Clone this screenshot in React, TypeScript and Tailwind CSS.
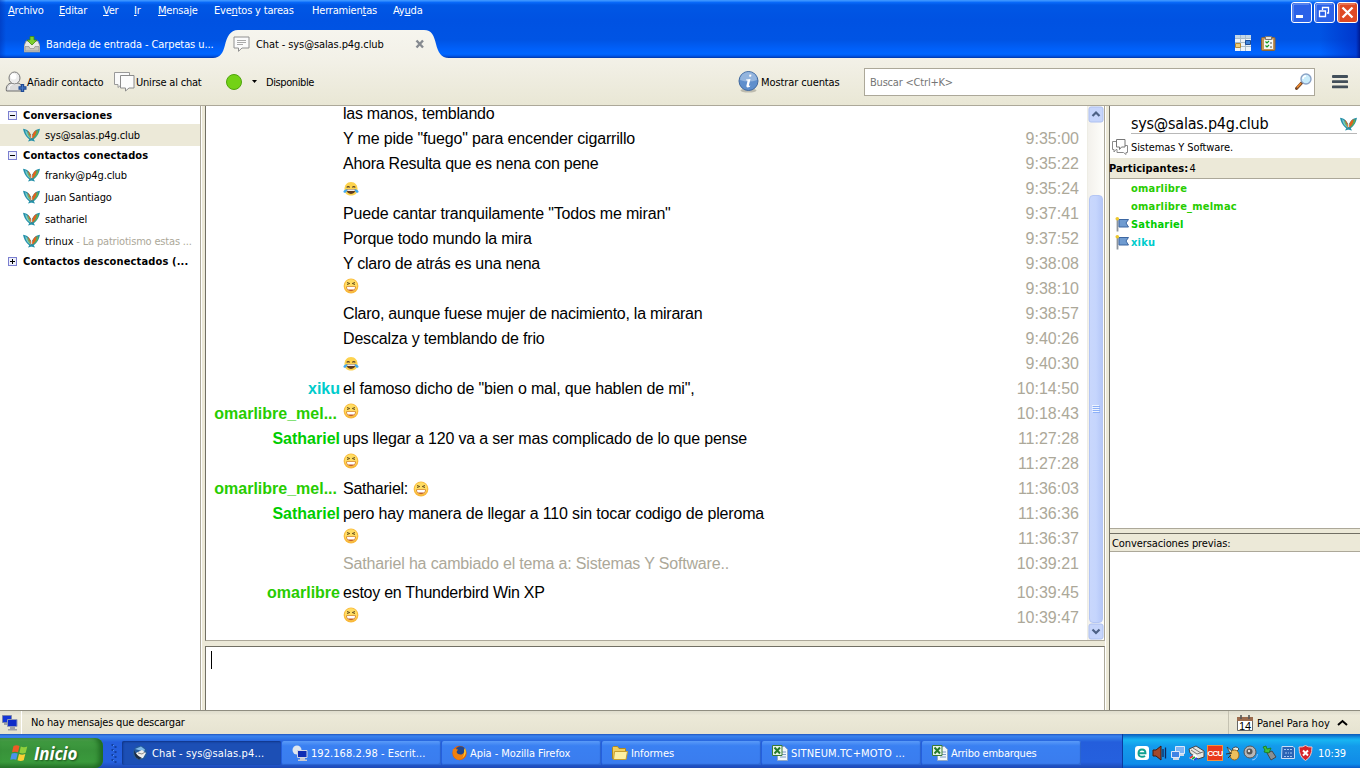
import React from 'react';

type Emoji = 'laugh' | 'joy';

interface ChatLine {
  nick?: string;
  color?: string;
  text?: string;
  emoji?: Emoji;
  raised?: boolean;
  system?: boolean;
  tight?: boolean;
  time?: string;
}

const GREEN = 'text-[#27cc00]';
const GREEN2 = 'text-[#00cc00]';
const CYAN = 'text-[#00cccc]';

const LINES: ChatLine[] = [
  { text: 'las manos, temblando', tight: true },
  { text: 'Y me pide "fuego" para encender cigarrillo', time: '9:35:00' },
  { text: 'Ahora Resulta que es nena con pene', tight: true, time: '9:35:22' },
  { emoji: 'joy', time: '9:35:24' },
  { text: 'Puede cantar tranquilamente "Todos me miran"', time: '9:37:41' },
  { text: 'Porque todo mundo la mira', time: '9:37:52' },
  { text: 'Y claro de atrás es una nena', tight: true, time: '9:38:08' },
  { emoji: 'laugh', raised: true, time: '9:38:10' },
  { text: 'Claro, aunque fuese mujer de nacimiento, la miraran', tight: true, time: '9:38:57' },
  { text: 'Descalza y temblando de frio', time: '9:40:26' },
  { emoji: 'joy', time: '9:40:30' },
  { nick: 'xiku', color: CYAN, text: 'el famoso dicho de "bien o mal, que hablen de mi",', time: '10:14:50' },
  { nick: 'omarlibre_mel...', color: GREEN, emoji: 'laugh', raised: true, time: '10:18:43' },
  { nick: 'Sathariel', color: GREEN2, text: 'ups llegar a 120 va a ser mas complicado de lo que pense', time: '11:27:28' },
  { emoji: 'laugh', raised: true, time: '11:27:28' },
  { nick: 'omarlibre_mel...', color: GREEN, text: 'Sathariel:', tight: true, emoji: 'laugh', time: '11:36:03' },
  { nick: 'Sathariel', color: GREEN2, text: 'pero hay manera de llegar a 110 sin tocar codigo de pleroma', time: '11:36:36' },
  { emoji: 'laugh', raised: true, time: '11:36:37' },
  { text: 'Sathariel ha cambiado el tema a: Sistemas Y Software..', system: true, time: '10:39:21' },
];

const LAST_LINES: ChatLine[] = [
  { nick: 'omarlibre', color: GREEN, text: 'estoy en Thunderbird Win XP', tight: true, time: '10:39:45' },
  { emoji: 'laugh', raised: true, time: '10:39:47' },
];

const Laugh: React.FC = () => (
  <svg width="16" height="16" viewBox="0 0 16 16" className="block shrink-0">
    <circle cx="8" cy="8" r="7.400" fill="#f9b93c" />
    <circle cx="8" cy="7.400" r="6.200" fill="#ffdc62" />
    <path d="M4 4.500l2.800 1L4 6.500M12 4.500l-2.800 1 2.800 1" fill="none" stroke="#6a5222" strokeWidth="1" />
    <path d="M3.200 8.600h9.600c0 3-2.200 4.600-4.800 4.600S3.200 11.600 3.200 8.600z" fill="#c4602a" />
    <path d="M4 9h8c0 1.100-.3 1.900-.8 2.500H4.800C4.300 10.900 4 10.100 4 9z" fill="#fff" />
  </svg>
);

const Joy: React.FC = () => (
  <svg width="16" height="16" viewBox="0 0 16 16" className="block shrink-0">
    <path d="M1.500 9C1.200 4 4 1 8 1s6.800 3 6.500 8c-.4 4-3 5.500-6.500 5.500S1.900 13 1.500 9z" fill="#fdd34f" />
    <path d="M3.800 6.600c.6-1.400 2.200-1.400 2.800 0M9.400 6.600c.6-1.400 2.200-1.400 2.800 0" fill="none" stroke="#5b4526" strokeWidth="1.200" />
    <path d="M3.500 8.300h9c0 3-2 4.600-4.500 4.600s-4.500-1.600-4.500-4.600z" fill="#5c3a21" />
    <path d="M4.200 8.500h7.600v1.400H4.200z" fill="#fff" />
    <path d="M.4 10.500C.8 9 2.500 8 4 8.200c.2 2-.6 3.600-2 3.600-1 0-1.600-.6-1.600-1.300zM15.600 10.500C15.200 9 13.500 8 12 8.200c-.2 2 .6 3.600 2 3.600 1 0 1.600-.6 1.600-1.300z" fill="#3fa9f0" />
  </svg>
);

const Wings: React.FC = () => (
  <svg width="17" height="14" viewBox="0 0 17 14" className="block shrink-0">
    <path d="M0 .8C3 1 5.500 2.600 7 5.200L9.500 9l2.500 4.500C6.500 13 1.500 8.500 0 .8z" fill="#2490a8" />
    <path d="M17 .8C14 1 11.500 2.600 10 5.200L7.500 9 5 13.500C10.500 13 15.500 8.500 17 .8z" fill="#2490a8" />
    <path d="M2 2c2.800 1.600 4.500 4.500 6 9C4.800 9.500 2.600 6.500 2 2z" fill="#79c7cf" />
    <path d="M4.600 2.400C6.300 3.500 7.200 5 8.300 8.400L8 11C7 8 6 5.500 4.600 2.400z" fill="#e2621c" />
    <path d="M4 3.600c1.600 2 2.700 4.200 3.300 6.600C5.700 8.500 4.600 6.400 4 3.600z" fill="#6fb23e" />
    <path d="M13.600 2c-3 1.400-4.600 4.500-5 8.800 3-1.500 5-4.600 5-8.800z" fill="#e2621c" />
    <path d="M15.400 2.200c-.3 3.800-2.400 6.900-5.400 8.500 2-2.400 3.500-4.800 4-8z" fill="#6fb23e" />
    <path d="M7.800 7h1.400v3H7.800z" fill="#fff" opacity=".7" />
    <path d="M7 0h3L8.500 6.500z" fill="none" />
  </svg>
);

const ChatRow: React.FC<{ line: ChatLine }> = ({ line }) => (
  <div className="flex h-[25px] items-center">
    <div
      className={`w-[134px] shrink-0 text-right font-bold whitespace-nowrap ${line.nick?.endsWith('...') ? 'pr-[3px]' : ''} ${line.color ?? ''}`}
    >
      {line.nick}
    </div>
    <div
      className={`ml-[3px] flex flex-1 items-center gap-[5px] whitespace-nowrap ${line.system ? 'text-[#aca899]' : 'text-black'} ${line.tight ? 'tracking-[-0.26px]' : 'tracking-[-0.17px]'}`}
    >
      {line.text && <span>{line.text}</span>}
      {line.emoji && (
        <span className={line.raised ? '-mt-[5px]' : ''}>{line.emoji === 'joy' ? <Joy /> : <Laugh />}</span>
      )}
    </div>
    <div className="mr-2 text-[#aca899]">{line.time}</div>
  </div>
);

const MENU = [
  { before: '', key: 'A', after: 'rchivo', w: 'w-[51px]' },
  { before: '', key: 'E', after: 'ditar', w: 'w-[44px]' },
  { before: '', key: 'V', after: 'er', w: 'w-[31px]' },
  { before: '', key: 'I', after: 'r', w: 'w-[24px]' },
  { before: '', key: 'M', after: 'ensaje', w: 'w-[56px]' },
  { before: 'Eve', key: 'n', after: 'tos y tareas', w: 'w-[98px]' },
  { before: 'Herramien', key: 't', after: 'as', w: 'w-[81px]' },
  { before: 'Ay', key: 'u', after: 'da', w: 'w-[40px]' },
];

const TitleBar: React.FC = () => (
  <div className="relative h-[58px] shrink-0 bg-[linear-gradient(to_right,#0030b080_0,transparent_6px,transparent_1320px,#0028c0a0_1356px,#001a90_1360px),linear-gradient(to_bottom,#3a93ff_0,#3a93ff_1px,#0a6cfc_2px,#0057e5_5px,#0052e2_20px,#0054e4_40px,#0060fa_49px,#0066ff_54px,#0056e8_56px,#0036a8_58px)] text-white">
    <div className="flex h-5 items-center pl-2 whitespace-nowrap">
      {MENU.map(m => (
        <span key={m.key} className={`shrink-0 ${m.w}`}>
          {m.before}
          <u className="underline-offset-1">{m.key}</u>
          {m.after}
        </span>
      ))}
    </div>
    <div className="flex h-[38px] pt-[10px] tracking-[-0.1px]">
      <div className="flex h-7 w-[213px] items-center gap-[6px] pl-6 whitespace-nowrap">
        <svg width="16" height="17" viewBox="0 0 16 17" className="shrink-0">
          <path d="M2 5h12l2 5v6H0v-6z" fill="#e9e9e4" stroke="#8a8a85" strokeWidth=".8" />
          <path d="M1 10.500h4l1 2h4l1-2h4V15H1z" fill="#c4c4bd" stroke="#888" strokeWidth=".6" />
          <path d="M6 .5h4V4h3L8 9 3 4h3z" fill="#7cd02d" stroke="#3f8a10" strokeWidth=".8" />
        </svg>
        <span>Bandeja de entrada - Carpetas u...</span>
      </div>
      <div className="relative h-7 w-[236px]">
        <svg width="236" height="28" viewBox="0 0 236 28" className="absolute inset-0">
          <defs>
            <linearGradient id="tab" x1="0" y1="0" x2="0" y2="1">
              <stop offset="0" stopColor="#f6f5ee" />
              <stop offset="1" stopColor="#f3f1e8" />
            </linearGradient>
          </defs>
          <path d="M0 28c7 0 10-5 12-13S17 0 25 0h186c8 0 10 6 12 14s5 14 13 14z" fill="url(#tab)" />
        </svg>
        <div className="relative flex h-7 items-center pl-5 text-black">
          <svg width="17" height="16" viewBox="0 0 17 16" className="shrink-0">
            <path d="M1 1h15v11H9l-3.500 3.300V12H1z" fill="#fbfbfb" stroke="#909090" />
            <path d="M4 4.500h9M4 6.500h9M4 8.500h6" stroke="#aaa" />
          </svg>
          <span className="ml-[6px] w-[159px]">Chat - sys@salas.p4g.club</span>
          <svg width="10" height="10" viewBox="0 0 10 10">
            <path d="M1.500 1.500l6.500 7M8 1.500l-6.500 7" stroke="#868a90" strokeWidth="2.400" />
          </svg>
        </div>
      </div>
      <div className="ml-auto flex items-start gap-[10px] pt-[5px] pr-[84px]">
        <svg width="16" height="16" viewBox="0 0 16 16">
          <path d="M0 0h16v16H0z" fill="#eef3f8" />
          <path d="M0 0h16v3H0z" fill="#c4d6e6" />
          <path d="M5.500 0v16M10.500 0v16M0 3.500h16M0 7.500h16M0 11.500h16" stroke="#a9bccb" />
          <path d="M.5 8.500h5v4h-5z" fill="#f0cf7a" stroke="#b88a34" />
          <path d="M10.500 5.500h5v4h-5z" fill="#3f83d8" stroke="#1c4b96" />
        </svg>
        <svg width="15" height="16" viewBox="0 0 15 16">
          <rect x=".5" y="2.500" width="13.500" height="13" rx="1" fill="#c39457" stroke="#8a6436" />
          <path d="M3 4.500h9v9.500H3z" fill="#f4f7f4" />
          <path d="M4.500 1.500h6v3h-6z" fill="#e2e2e2" stroke="#777" />
          <path d="M4.500 6.500L6 8l2-2M4.500 10.500L6 12l2-2" fill="none" stroke="#159a25" strokeWidth="1.200" />
          <path d="M9 8h2M9 12h2" stroke="#555" />
        </svg>
      </div>
    </div>
    <div className="absolute top-[2px] right-[2px] flex gap-[2px]">
      <svg width="21" height="21" viewBox="0 0 21 21">
        <rect x=".5" y=".5" width="20" height="20" rx="2.500" fill="#2b62e8" stroke="#fff" />
        <path d="M2 19V4q0-2 2-2h14" stroke="#7fa4f5" fill="none" />
        <path d="M5 13h7v3H5z" fill="#fff" />
      </svg>
      <svg width="21" height="21" viewBox="0 0 21 21">
        <rect x=".5" y=".5" width="20" height="20" rx="2.500" fill="#2b62e8" stroke="#fff" />
        <path d="M2 19V4q0-2 2-2h14" stroke="#7fa4f5" fill="none" />
        <path d="M8.500 8V5.500h6V11H13M8 5.500h7M5.500 9h6v5.500h-6z" stroke="#fff" strokeWidth="1.300" fill="none" />
      </svg>
      <svg width="21" height="21" viewBox="0 0 21 21">
        <rect x=".5" y=".5" width="20" height="20" rx="2.500" fill="#df4a24" stroke="#fff" />
        <path d="M2 19V4q0-2 2-2h14" stroke="#f09a80" fill="none" />
        <path d="M5.500 5.500l10 10M15.500 5.500l-10 10" stroke="#fff" strokeWidth="2.300" />
      </svg>
    </div>
  </div>
);

const Toolbar: React.FC = () => (
  <div className="flex h-[48px] shrink-0 items-center border-b border-[#aca899] bg-linear-to-b from-[#f3f1e8] to-[#e9e7d5] whitespace-nowrap">
    <svg width="22" height="22" viewBox="0 0 22 22" className="ml-[5px] shrink-0">
      <path d="M1.500 20c-1-4 1-7.500 5-8h6c3.500.5 5 3 4.500 8z" fill="#dcdcdc" stroke="#6e6e6e" />
      <path d="M4 18.500c0-3 1-4.500 3.500-5h4" fill="none" stroke="#fff" />
      <ellipse cx="9.500" cy="7" rx="5.500" ry="6" fill="#ececec" stroke="#7a7a7a" />
      <ellipse cx="8.500" cy="5.500" rx="3" ry="3" fill="#fff" />
      <path d="M17.500 13v8M13.500 17h8" stroke="#1f4a93" strokeWidth="3.400" />
      <path d="M17.500 14v6M14.500 17h6" stroke="#4a7cc8" strokeWidth="1.200" />
    </svg>
    <span className="w-[87px] pt-px tracking-[-0.14px]">Añadir contacto</span>
    <svg width="21" height="20" viewBox="0 0 21 20" className="shrink-0">
      <path d="M.5.500h15v12h-8L4 15.500v-3H.5z" fill="#fafafa" stroke="#999" />
      <path d="M6.500 3.500h13.500V16h-5L11.500 19v-3h-5z" fill="#fcfcfc" stroke="#8c8c8c" />
    </svg>
    <span className="ml-[1px] w-[90px] pt-px">Unirse al chat</span>
    <svg width="16" height="16" viewBox="0 0 16 16" className="shrink-0">
      <circle cx="8" cy="8" r="7.500" fill="#73d216" stroke="#4fa40c" />
    </svg>
    <svg width="5" height="3" viewBox="0 0 5 3" className="ml-[10px]">
      <path d="M0 0h5L2.500 3z" fill="#000" />
    </svg>
    <span className="ml-[9px] pt-px tracking-[-0.4px]">Disponible</span>
    <div className="ml-auto flex items-center">
      <svg width="21" height="22" viewBox="0 0 21 22" className="mr-px -ml-px shrink-0">
        <ellipse cx="10.500" cy="19.500" rx="8" ry="2" fill="#bdbbae" />
        <circle cx="10.500" cy="10" r="9.500" fill="#5f8fcc" stroke="#41699f" />
        <path d="M2 9a8.500 8 0 0 1 17 0q-8 3-17 0z" fill="#94b5de" />
        <path d="M11.500 3.500l2 .2-.5 2-2-.2zM8 8.500l4.500-.6-1.600 6.300q0 1 1.400.3l-.4 1.200q-3.800 1.800-3.500-1l1.100-4.700q0-.8-1.500-.6z" fill="#fff" />
      </svg>
      <span className="ml-[1px] w-[103px] pt-px tracking-[-0.1px]">Mostrar cuentas</span>
      <div className="flex h-7 w-[451px] items-center justify-between border border-[#aca899] bg-white pr-[2px] pl-[5px] text-[#757575]">
        <span className="pt-px">Buscar &lt;Ctrl+K&gt;</span>
        <svg width="17" height="17" viewBox="0 0 17 17">
          <path d="M1.500 15.500L7 9.500" stroke="#7a4a28" strokeWidth="3" strokeLinecap="round" />
          <path d="M2 14.500L6 10.200" stroke="#f08a2c" strokeWidth="1.600" />
          <circle cx="11" cy="6" r="5" fill="#c9ecfb" stroke="#8ba3c6" strokeWidth="1.400" />
          <path d="M8 6a3 3 0 0 1 3-3" stroke="#fff" fill="none" strokeWidth="1.500" />
        </svg>
      </div>
      <svg width="16" height="14" viewBox="0 0 16 14" className="mr-3 ml-[17px]">
        <path d="M1 1.500h14M1 6.700h14M1 11.900h14" stroke="#424f5a" strokeWidth="2.800" strokeLinecap="round" />
      </svg>
    </div>
  </div>
);

const GroupRow: React.FC<{ label: string; closed?: boolean }> = ({ label, closed }) => (
  <div className="flex h-[18px] items-center pl-2 font-bold">
    <svg width="9" height="9" viewBox="0 0 9 9" className="shrink-0">
      <rect x=".5" y=".5" width="8" height="8" fill="#eef0fa" stroke="#7b7fd0" />
      <path d={closed ? 'M2 4.500h5M4.500 2v5' : 'M2 4.500h5'} stroke="#000" />
    </svg>
    <span className="ml-[6px] tracking-[0.13px] whitespace-nowrap">{label}</span>
  </div>
);

const ContactRow: React.FC<{ name: string; status?: string; selected?: boolean }> = ({ name, status, selected }) => (
  <div className={`flex h-[22px] items-center pl-[23px] tracking-[-0.12px] whitespace-nowrap ${selected ? 'bg-[#ece9d8]' : ''}`}>
    <Wings />
    <span className="ml-[5px]">{name}</span>
    {status && <span className="tracking-[-0.18px] text-[#aca899]">&nbsp;- {status}</span>}
  </div>
);

const Sidebar: React.FC = () => (
  <div className="w-[201px] shrink-0 border-r border-[#aca899] bg-white">
    <GroupRow label="Conversaciones" />
    <ContactRow name="sys@salas.p4g.club" selected />
    <GroupRow label="Contactos conectados" />
    <ContactRow name="franky@p4g.club" />
    <ContactRow name="Juan Santiago" />
    <ContactRow name="sathariel" />
    <ContactRow name="trinux" status="La patriotismo estas ..." />
    <GroupRow label="Contactos desconectados (..." closed />
  </div>
);

const ScrollButton: React.FC<{ down?: boolean }> = ({ down }) => (
  <svg width="16" height="17" viewBox="0 0 16 17" className="shrink-0">
    <rect x="1" y="1" width="14" height="15" rx="2" fill="#c6d5fb" stroke="#adc0f0" />
    <path d={down ? 'M4.500 6.500L8 10l3.500-3.500' : 'M4.500 10L8 6.500l3.500 3.500'} stroke="#4d6185" strokeWidth="2.200" fill="none" />
  </svg>
);

const Scrollbar: React.FC = () => (
  <div className="flex w-[17px] flex-col border-l border-[#eeede5] bg-linear-to-r from-[#f3f1ec] to-[#fefefb]">
    <ScrollButton />
    <div className="mx-px mt-[72px] flex h-[428px] items-center justify-center rounded-sm border border-[#b4c6f4] bg-linear-to-r from-[#c9d7fc] via-[#c5d5fd] to-[#b6c8f8]">
      <svg width="8" height="8" viewBox="0 0 8 8">
        <path d="M0 .5h7M0 2.500h7M0 4.500h7M0 6.500h7" stroke="#eef4fe" />
        <path d="M1 1.500h7M1 3.500h7M1 5.500h7M1 7.500h7" stroke="#8cb0f8" />
      </svg>
    </div>
    <ScrollButton down />
  </div>
);

const Conversation: React.FC = () => (
  <div className="flex w-[900px] shrink-0 flex-col bg-[#ece9d8]">
    <div className="flex h-[535px] overflow-hidden border-r border-b border-l border-r-[#aca899] border-b-[#aca899] border-l-[#716f64] bg-white">
      <div className="-mt-[5px] flex-1 font-['Liberation_Sans',Arial,sans-serif] text-[16px] tracking-normal">
        {LINES.map((l, i) => (
          <ChatRow key={i} line={l} />
        ))}
        <div className="pt-1">
          {LAST_LINES.map((l, i) => (
            <ChatRow key={i} line={l} />
          ))}
        </div>
      </div>
      <Scrollbar />
    </div>
    <div className="mt-[5px] flex-1 border-t border-r border-l border-t-[#716f64] border-r-[#aca899] border-l-[#716f64] bg-white pt-1 pl-[5px]">
      <div className="h-[18px] w-px bg-black" />
    </div>
  </div>
);

const PARTICIPANTS = [
  { name: 'omarlibre', color: GREEN, flag: false },
  { name: 'omarlibre_melmac', color: GREEN, flag: false },
  { name: 'Sathariel', color: GREEN2, flag: true },
  { name: 'xiku', color: CYAN, flag: true },
];

const InfoPanel: React.FC = () => (
  <div className="flex flex-1 flex-col border-l border-[#716f64] bg-[#ece9d8]">
    <div className="h-[423px] border-b border-[#aca899] bg-white">
      <div className="mr-[3px] ml-[21px] flex h-7 items-end justify-between border-b border-[#b8b8b8]">
        <span className="text-[16px] leading-[18px] tracking-[-0.22px]">sys@salas.p4g.club</span>
        <div className="mb-[2px]">
          <Wings />
        </div>
      </div>
      <div className="flex h-6 items-center pt-[2px] pl-[2px]">
        <svg width="16" height="16" viewBox="0 0 16 16" className="shrink-0">
          <path d="M5 10.500H4L2 13v-2.500H.5v-8H4M10 13.500h1.500l2.500 2v-2h1.500v-7H13" fill="none" stroke="#8a8a8a" />
          <path d="M4.500.5h8.500V8H9.500l-2 2.500V8h-3z" fill="#fff" stroke="#777" />
          <path d="M5 10.500v3h5" fill="none" stroke="#8a8a8a" />
        </svg>
        <span className="ml-[3px] tracking-[-0.1px]">Sistemas Y Software.</span>
      </div>
      <div className="flex h-[21px] items-center border-b border-[#aca899] bg-[#ece9d8]">
        <b className="-ml-px tracking-[0.1px]">Participantes:</b>
        <span className="ml-px">4</span>
      </div>
      {PARTICIPANTS.map(p => (
        <div key={p.name} className="flex h-[18px] items-center pl-[5px]">
          <div className="w-4">
            {p.flag && (
              <svg width="14" height="15" viewBox="0 0 14 15">
                <path d="M2.500 2v12.500" stroke="#8e959c" strokeWidth="1.800" />
                <path d="M4 2.500h9.500L11 6l2.500 4H4z" fill="#6f9bd0" stroke="#3c67a2" />
                <circle cx="2.300" cy="1.800" r="1.800" fill="#edc72c" />
              </svg>
            )}
          </div>
          <b className={`tracking-[0.22px] ${p.color}`}>{p.name}</b>
        </div>
      ))}
    </div>
    <div className="mt-1 flex h-[19px] items-center border-t border-b border-t-[#716f64] border-b-[#aca899] pt-px pl-[2px] tracking-[-0.1px]">
      Conversaciones previas:
    </div>
    <div className="flex-1 bg-white" />
  </div>
);

const StatusBar: React.FC = () => (
  <div className="flex h-6 shrink-0 items-center border-t border-[#8f8d80] bg-linear-to-b from-[#dedccd] via-[#ece9d8] via-20% to-[#e6e3d0]">
    <svg width="16" height="16" viewBox="0 0 16 16" className="ml-[2px] shrink-0">
      <path d="M.5.5h9v7h-9z" fill="#1436d8" stroke="#7d86a8" />
      <path d="M5.500 4.500h9.500v7H5.500z" fill="#0f2cc8" stroke="#8f97b8" />
      <path d="M8 12h5v2H8zM6 14h9v1.500H6zM2 8h3v2H2z" fill="#9ea0a8" />
    </svg>
    <div className="ml-[3px] h-full w-px bg-white" />
    <span className="ml-[9px]">No hay mensajes que descargar</span>
    <div className="ml-auto flex h-full items-center border-l border-[#c5c2b2] pl-2">
      <svg width="16" height="16" viewBox="0 0 16 16">
        <path d="M.5 3.500h15v12H.5z" fill="#fff" stroke="#666" />
        <path d="M0 2h16v4H0z" fill="#9b6b4c" />
        <path d="M4 0v4M12 0v4" stroke="#555" strokeWidth="1.600" />
        <text x="8" y="14.500" textAnchor="middle" fontSize="11" letterSpacing="0" fill="#000" fontFamily="Liberation Sans">14</text>
      </svg>
      <span className="ml-1 w-[80px] pt-px tracking-[0px]">Panel Para hoy</span>
      <svg width="11" height="7" viewBox="0 0 11 7" className="mr-3">
        <path d="M1 6l4.500-4L10 6" stroke="#000" strokeWidth="2" fill="none" />
      </svg>
    </div>
  </div>
);

const ThunderbirdIcon: React.FC = () => (
  <svg width="16" height="16" viewBox="0 0 16 16" className="shrink-0">
    <circle cx="8" cy="8" r="7.200" fill="#245a9c" />
    <path d="M3 4l6-2.500 4 3-1 2z" fill="#7db8e8" />
    <path d="M3 8.500L10 5l4 3-3 5-5 1z" fill="#f1f1ee" />
    <path d="M2 5q2 5 8 8l-3 1.500Q2 13 2 5z" fill="#1d2c44" />
    <path d="M6 8l4 1 3-2" stroke="#888" fill="none" />
  </svg>
);

const RemoteIcon: React.FC = () => (
  <svg width="16" height="16" viewBox="0 0 16 16" className="shrink-0">
    <circle cx="5" cy="5" r="4.500" fill="#dfe6ee" />
    <path d="M5.500 5.500h9.500v7H5.500z" fill="#0f2cb4" stroke="#cfd4e4" />
    <path d="M8 13h5v1.500H8zM6 14.500h9V16H6z" fill="#c7c9d2" />
  </svg>
);

const FirefoxIcon: React.FC = () => (
  <svg width="15" height="16" viewBox="0 0 15 16" className="shrink-0">
    <circle cx="7.500" cy="8" r="7.200" fill="#e66000" />
    <circle cx="8.500" cy="6" r="4.800" fill="#20478f" />
    <path d="M.8 4Q2 4 3 3.500q1.500 1 3 1L4.500 7q1 3 5 2.500 2-.5 3.500-4.500 1.600 4-1 7.500-3 3-7 2Q0 12 .8 4z" fill="#f08010" />
    <path d="M13 3q2.500 6-2.500 10 2.500-5 1.500-8z" fill="#ffcb2d" />
  </svg>
);

const FolderIcon: React.FC = () => (
  <svg width="16" height="14" viewBox="0 0 16 14" className="shrink-0">
    <path d="M.5 12.500v-11l1-1h4l1.500 2h6.500v10z" fill="#f3cf5c" stroke="#b08a20" />
    <path d="M2.500 5.500h13l-1.500 8H1.500z" fill="#fdf0a4" stroke="#c79f2f" />
  </svg>
);

const ExcelIcon: React.FC = () => (
  <svg width="16" height="16" viewBox="0 0 16 16" className="shrink-0">
    <path d="M5.500 1.500h7l3 3v11h-10z" fill="#f2f6fb" stroke="#8fa6c4" />
    <path d="M8 7h6M8 9.500h6M8 12h6" stroke="#7d9cc4" />
    <path d="M.5.500h9.500v10H.5z" fill="#e8f3e4" stroke="#3b7a36" />
    <path d="M2.500 2.500l5.500 6M8 2.500l-5.500 6" stroke="#247a28" strokeWidth="1.900" />
  </svg>
);

const TASKS = [
  { title: 'Chat - sys@salas.p4...', icon: <ThunderbirdIcon />, tracking: 'tracking-[0.13px]', active: true },
  { title: '192.168.2.98 - Escrit...', icon: <RemoteIcon />, tracking: 'tracking-[0.06px]' },
  { title: 'Apia - Mozilla Firefox', icon: <FirefoxIcon />, tracking: 'tracking-[-0.06px]' },
  { title: 'Informes', icon: <FolderIcon />, tracking: 'tracking-[-0.06px]' },
  { title: 'SITNEUM.TC+MOTO ...', icon: <ExcelIcon />, tracking: 'tracking-[0.15px]' },
  { title: 'Arribo embarques', icon: <ExcelIcon />, tracking: 'tracking-[-0.2px]' },
];

const Tray: React.FC = () => (
  <div className="ml-auto flex h-full w-[238px] items-center gap-[2px] border-l border-[#0a3aa0] bg-[linear-gradient(to_bottom,#0c59b9_0,#139ee9_4px,#18b5f2_6px,#139beb_12px,#1290e8_24px,#0d8dea_30px,#095bc9_34px)] pt-1 pl-[11px]">
    <svg width="16" height="16" viewBox="0 0 16 16">
      <rect x="1" y="1" width="14" height="14" rx="3" fill="#fff" />
      <path d="M4.500 8.300h7Q11.500 4.500 8 4.500T4.500 8.200 8 11.800q2 0 3-1" fill="none" stroke="#10a090" strokeWidth="1.900" />
    </svg>
    <svg width="16" height="16" viewBox="0 0 16 16">
      <path d="M1 5h3l5-4v14l-5-4H1z" fill="#a3482a" stroke="#47180c" />
      <path d="M11 4v8M13.500 2.500v11" stroke="#10285c" strokeWidth="1.300" />
    </svg>
    <svg width="16" height="16" viewBox="0 0 16 16">
      <path d="M5.500 1.500h9v7h-9z" fill="#7db4f4" stroke="#dce8f8" />
      <path d="M1.500 6.500h8v6h-8z" fill="#3f83e4" stroke="#dce8f8" />
      <path d="M3 14h6M10 10h4" stroke="#cdd8e8" strokeWidth="2" />
    </svg>
    <svg width="17" height="16" viewBox="0 0 17 16">
      <path d="M1 4l7-3 8 5v6l-6 2-8-6z" fill="#e4e4e0" stroke="#454545" />
      <path d="M3 5l6 4 6-2M5 3l8 5" stroke="#777" fill="none" />
      <path d="M1 13l6-4 3 3-4 3.500z" fill="#fff" />
      <path d="M2 13l3-2" stroke="#e33" strokeWidth="1.600" />
      <path d="M4 14l3-2" stroke="#18a838" strokeWidth="1.600" />
      <path d="M6 15l3-2" stroke="#2345e0" strokeWidth="1.600" />
    </svg>
    <svg width="16" height="16" viewBox="0 0 16 16">
      <rect x=".5" y=".5" width="15" height="15" fill="#e93a1c" stroke="#f4903c" />
      <text x="8" y="11" textAnchor="middle" fontSize="8" fontWeight="bold" letterSpacing="-0.8" fill="#fff" fontFamily="Liberation Sans">CCU</text>
    </svg>
    <svg width="16" height="16" viewBox="0 0 16 16">
      <path d="M7 4q4-4 7 0l-3 3zM2 2l5 4-2 2z" fill="#f0eee0" stroke="#333" strokeWidth=".8" />
      <ellipse cx="9.500" cy="10" rx="4.500" ry="5" fill="#efc05c" stroke="#9c6a1c" />
      <path d="M1 9l6-1M3 13l3-3" stroke="#333" />
    </svg>
    <svg width="16" height="16" viewBox="0 0 16 16">
      <ellipse cx="7" cy="7" rx="6" ry="6" fill="#b7b7b7" stroke="#565656" />
      <circle cx="6.500" cy="6.500" r="3" fill="#555" />
      <circle cx="6" cy="6" r="1.200" fill="#ddd" />
      <path d="M14.500 9q0 4-4 6M12 14l-3 1" stroke="#7fc0ff" fill="none" />
    </svg>
    <svg width="17" height="16" viewBox="0 0 17 16">
      <path d="M6 8l5-2 4 6-5 3z" fill="#8a8f92" stroke="#43484c" />
      <path d="M2 2l3-1 1 3 4-1-2 5-5-1 1-2z" fill="#3fc03a" stroke="#187818" strokeWidth=".8" />
    </svg>
    <svg width="16" height="16" viewBox="0 0 16 16">
      <path d="M2 1.500h11l1.500 1.500v10.500H1.500z" fill="#2a63b4" stroke="#c9dcf4" />
      <path d="M4 4.500h8M4 11.500h8M5 8h2M8 8h1M10 8h2" stroke="#a9c9f4" strokeDasharray="2 1" />
    </svg>
    <svg width="15" height="16" viewBox="0 0 15 16">
      <path d="M7.500.5q3 2 6.500 1.500 0 10-6.500 13.500Q1 12 1 2 4.500 2.500 7.500.5z" fill="#d6232b" stroke="#f0c4c4" />
      <path d="M5 5.500l5 5M10 5.500l-5 5" stroke="#fff" strokeWidth="2" />
    </svg>
    <span className="ml-[3px] tracking-[-0.1px]">10:39</span>
  </div>
);

const Taskbar: React.FC = () => (
  <div className="flex h-[34px] shrink-0 bg-[linear-gradient(to_bottom,#1f55bd_0,#3b83ee_2px,#2f74e4_5px,#245edc_8px,#2560de_28px,#1c48b4_34px)] whitespace-nowrap text-white">
    <div className="mt-1 flex h-[30px] w-[103px] items-center gap-1 rounded-r-[8px] bg-[linear-gradient(to_bottom,#5cab5c_0,#3f9a40_4px,#38923a_12px,#3a9a3c_24px,#2c7a2e_30px)] pl-[10px] shadow-[inset_-4px_0_5px_#1f6a22]">
      <svg width="20" height="18" viewBox="0 0 20 18" className="shrink-0">
        <path d="M3.500 2Q6.500.5 9.500 2L8 8.300Q5 7 2 8.300z" fill="#ee5a26" />
        <path d="M10.800 2.500q3 1.500 6.500 0l-1.600 6.200q-3 1.400-6.300 0z" fill="#8fcf3c" />
        <path d="M1.700 9.600q3-1.300 6 0L6.200 15.800q-3-1.300-6 0z" fill="#4b92ec" />
        <path d="M9 10q3.200 1.400 6.300 0l-1.600 6.200q-3 1.400-6.200 0z" fill="#fbd035" />
      </svg>
      <span className="font-['Open_Sans',sans-serif] text-[17px] font-bold italic tracking-[-0.1px] [text-shadow:1px_1px_2px_#1b4d1b]">Inicio</span>
    </div>
    <svg width="19" height="34" viewBox="0 0 19 34" className="shrink-0">
      <path d="M9.500 10v20M12.500 12v20" stroke="#133f9e" strokeWidth="2" strokeDasharray="2 3" />
      <path d="M10.500 11v20" stroke="#4d92f4" strokeDasharray="1 4" />
    </svg>
    <div className="flex pt-[7px]">
      {TASKS.map(t => (
        <div
          key={t.title}
          className={`mr-px flex h-6 w-[159px] items-center rounded-[2px] pl-[10px] ${
            t.active
              ? 'gap-1 bg-[#1c4fb5] shadow-[inset_1px_1px_2px_#0f3486]'
              : 'gap-[3px] bg-linear-to-b from-[#5a9bf8] via-[#3a80f2] via-20% to-[#3a7cee] shadow-[inset_-1px_-1px_1px_#2a62cc]'
          }`}
        >
          {t.icon}
          <span className={t.tracking}>{t.title}</span>
        </div>
      ))}
    </div>
    <Tray />
  </div>
);

export default function App() {
  return (
    <div className="flex h-[768px] w-[1360px] flex-col overflow-hidden bg-[#ece9d8] font-['DejaVu_Sans_Condensed','DejaVu_Sans',sans-serif] text-[11px] leading-none tracking-[-0.2px] text-black">
      <TitleBar />
      <Toolbar />
      <div className="flex h-[604px] shrink-0">
        <Sidebar />
        <div className="w-1 shrink-0 border-l border-white bg-[#ece9d8]" />
        <Conversation />
        <div className="w-1 shrink-0 border-l border-white bg-[#ece9d8]" />
        <InfoPanel />
      </div>
      <StatusBar />
      <Taskbar />
    </div>
  );
}
